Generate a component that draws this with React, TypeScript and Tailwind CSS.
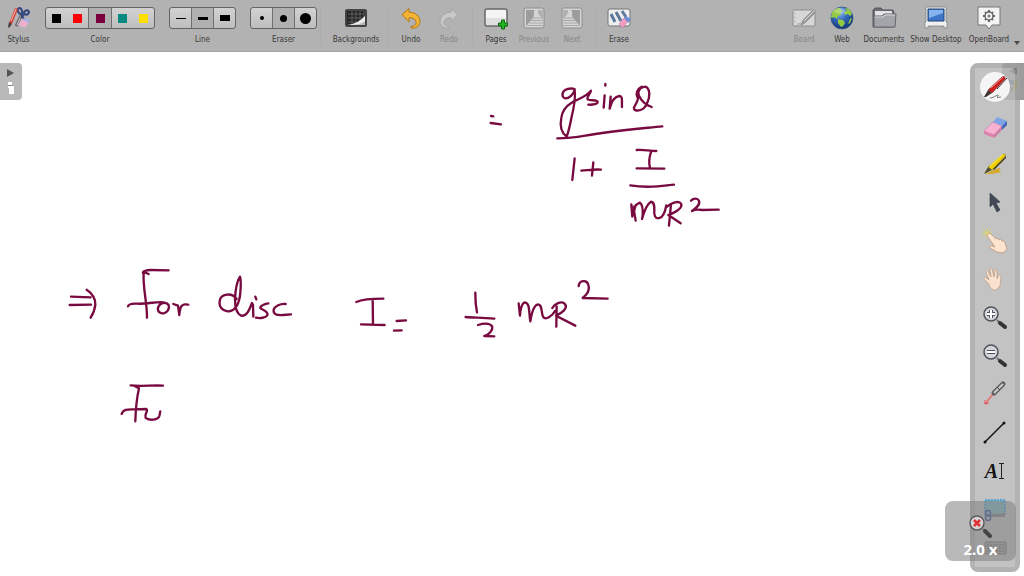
import type { ReactNode } from 'react';

type ToolProps = { label: string; width: string; disabled?: boolean; children: ReactNode };

function Tool({ label, width, disabled, children }: ToolProps) {
  return (
    <button type="button" disabled={disabled} className={`flex shrink-0 flex-col items-center gap-1 ${width}`}>
      <span className={`flex h-6 items-center justify-center ${disabled ? 'opacity-60' : ''}`}>{children}</span>
      <span className={`text-[8px] leading-3 whitespace-nowrap ${disabled ? 'text-[#868686]' : 'text-[#383838]'}`}>{label}</span>
    </button>
  );
}

type Choice = { name: string; mark: string };
type ChoiceGroupProps = { label: string; choices: Choice[]; selected: number; width: string; margin: string };

function ChoiceGroup({ label, choices, selected, width, margin }: ChoiceGroupProps) {
  return (
    <div role="group" aria-label={label} className={`flex shrink-0 flex-col items-center gap-1 ${margin}`}>
      <div className="flex h-6 items-center">
        <div className={`flex h-[22px] overflow-hidden rounded-[3px] border border-[#646464] bg-linear-to-b from-[#d2d2d2] to-[#bebebe] ${width}`}>
          {choices.map((c, i) => (
            <button
              key={c.name}
              type="button"
              aria-label={c.name}
              aria-pressed={i === selected}
              className={`flex min-w-0 flex-1 items-center justify-center ${i === selected ? 'border-x border-[#707070] bg-[#b0b0b0]' : ''}`}
            >
              <span className={`shrink-0 ${c.mark}`} />
            </button>
          ))}
        </div>
      </div>
      <span className="text-[8px] leading-3 text-[#383838]">{label}</span>
    </div>
  );
}

const colors: Choice[] = [
  { name: 'Black', mark: 'size-[9px] bg-black' },
  { name: 'Red', mark: 'size-[9px] bg-[#ff0000]' },
  { name: 'Burgundy', mark: 'size-[9px] bg-[#7b0040]' },
  { name: 'Teal', mark: 'size-[9px] bg-[#078a80]' },
  { name: 'Yellow', mark: 'size-[9px] bg-[#ffdf00]' },
];
const lines: Choice[] = [
  { name: 'Fine line', mark: 'h-[1px] w-[10px] bg-black' },
  { name: 'Medium line', mark: 'h-[3px] w-[10px] bg-black' },
  { name: 'Strong line', mark: 'h-[6px] w-[10px] bg-black' },
];
const erasers: Choice[] = [
  { name: 'Small eraser', mark: 'size-1 rounded-full bg-black' },
  { name: 'Medium eraser', mark: 'size-[7px] rounded-full bg-black' },
  { name: 'Large eraser', mark: 'size-[11px] rounded-full bg-black' },
];

function StylusIcon() {
  return (
    <svg width="24" height="24" viewBox="0 0 24 24" fill="none" aria-hidden="true">
      <path d="m15 8-6 12" stroke="#6d6a70" strokeWidth="3" />
      <path d="m15 8-5 11" stroke="#c9c9cf" />
      <ellipse cx="13" cy="5" rx="2" ry="3" stroke="#33457c" strokeWidth="2" transform="rotate(-20 13 5)" />
      <ellipse cx="19.500" cy="6.500" rx="2.500" ry="2" stroke="#33457c" strokeWidth="2" transform="rotate(-35 19.500 6.500)" />
      <path d="m14 8 3 5M17 8l-3 4" stroke="#33457c" strokeWidth="2" />
      <path d="m2 17 6-15 3 1-6 15z" fill="#d2453c" />
      <path d="M4 15 9 3" stroke="#f4b9b2" />
      <path d="m1 21 1-5 3 2-3 4z" fill="#463c38" />
      <path d="m11 19 4-6 7 3-4 6z" fill="#eab0cd" />
      <path d="m15 13 3-1 5 2-1 3z" fill="#9fb2e6" />
    </svg>
  );
}

function BackgroundsIcon() {
  return (
    <svg width="24" height="20" viewBox="0 0 24 20" fill="none" aria-hidden="true">
      <rect x="2" y="2" width="20" height="16" rx="1" fill="#272727" stroke="#444" strokeWidth="2" />
      <path d="M4 6h16M4 10h16M8 3v13M12 3v13M16 3v13M20 3v8M4 14h8" stroke="#707070" strokeWidth=".7" />
      <path d="M3 17C12 16 17 12 21 8v9z" fill="#efefef" />
      <path d="M5 17c7 0 12-1 16-4v4z" fill="#b9b9b9" />
    </svg>
  );
}

function ArrowIcon({ redo }: { redo?: boolean }) {
  return (
    <svg width="20" height="22" viewBox="0 0 20 22" aria-hidden="true">
      <path
        transform={redo ? 'matrix(-1 0 0 1 20 0)' : undefined}
        d="M1 7.5 8 1.5v3.7c7 0 11 4.5 11 9.3 0 3-2 5.500-5 6.500H10v-1.700c4 0 5.500-2 5-4.500-.5-2.500-3-4-7-4v4z"
        fill={redo ? '#d6d6d6' : '#f5b335'}
        stroke={redo ? '#9a9a9a' : '#b07714'}
      />
    </svg>
  );
}

function PagesIcon() {
  return (
    <svg width="26" height="24" viewBox="0 0 26 24" aria-hidden="true">
      <rect x="2" y="3" width="22" height="17" rx="2" fill="#f4f4f4" stroke="#676767" strokeWidth="1.500" />
      <path d="M3 12h20v7H3z" fill="#dfdfdf" />
      <path d="M18.500 14h3v3h3v3h-3v3h-3v-3h-3v-3h3z" fill="#22b422" stroke="#0c6b10" />
    </svg>
  );
}

function StairsIcon({ flip }: { flip?: boolean }) {
  return (
    <svg width="22" height="24" viewBox="0 0 22 24" aria-hidden="true">
      <rect x="1" y="2" width="20" height="20" rx="2" fill="#ededed" stroke="#777" />
      <g transform={flip ? 'matrix(-1 0 0 1 22 0)' : undefined}>
        <path d="M3 4h9C9 7 13 9 9 13l-6 7z" fill="#8f8f8f" />
        <path d="M15 4h5v9c-2-3-6-4-5-9z" fill="#b1b1b1" />
        <path d="M9 12h11M8 14.500h12M6 17h14M4 19.500h16" stroke="#a2a2a2" />
      </g>
    </svg>
  );
}

function EraseIcon() {
  return (
    <svg width="26" height="24" viewBox="0 0 26 24" aria-hidden="true">
      <rect x="2" y="3" width="22" height="17" rx="2" fill="#eeeeee" stroke="#747474" />
      <path d="m5 8 4 8M10 6l5 9M16 5l4 6" stroke="#5d789d" strokeWidth="3" />
      <path d="m13 18 5-6 4 3-5 7z" fill="#ef9dc0" stroke="#ba6d94" strokeWidth=".5" />
      <path d="m18 12 2-2 5 3-3 4z" fill="#7190d5" />
    </svg>
  );
}

function BoardIcon() {
  return (
    <svg width="24" height="20" viewBox="0 0 24 20" aria-hidden="true">
      <rect x="1" y="2" width="22" height="16" rx="1" fill="#f0f0f0" stroke="#777" />
      <path d="M3 5v1M3 9v1M3 13v1M5 16h6" stroke="#888" />
      <path d="m9 17 2-5L20 3l3 2-10 10z" fill="#8b8b8b" stroke="#555" strokeWidth=".5" />
      <path d="m12 13 9-9" stroke="#eee" />
    </svg>
  );
}

function WebIcon() {
  return (
    <svg width="24" height="24" viewBox="0 0 24 24" aria-hidden="true">
      <defs>
        <radialGradient id="sea" cx=".4" cy=".25" r=".8">
          <stop offset="0" stopColor="#8fb9ef" />
          <stop offset=".45" stopColor="#3269bd" />
          <stop offset="1" stopColor="#12316d" />
        </radialGradient>
      </defs>
      <circle cx="12" cy="12" r="11" fill="url(#sea)" stroke="#31507d" strokeWidth=".7" />
      <path d="M2 7c2-4 5-5 8-5l1 2 2 1-3 2 1 2-3 1-1 3-3-2-2 1-1-1zM15 2c4 0 6 3 7 6l-2 2-2-2-3 1-1-3 3-1zM8 13l5 1 2 3-2 3-2 1-3-4zM20 13l2-1-2 5-2 1z" fill="#95ca42" />
      <ellipse cx="10" cy="5" rx="6" ry="3" fill="#fff" opacity=".25" />
    </svg>
  );
}

function DocumentsIcon() {
  return (
    <svg width="26" height="24" viewBox="0 0 26 24" aria-hidden="true">
      <path d="M2 21V4l2-2h6l2 2h10l1 3v14z" fill="#6b6d72" stroke="#55575b" />
      <path d="M4 5h17v12H4z" fill="#e4e4e4" />
      <path d="M3 21V10h8l2-2h12l-1 13z" fill="#a3a5aa" stroke="#65676b" />
      <path d="M4 11h8l2-2h10" stroke="#d6d6d6" fill="none" />
    </svg>
  );
}

function DesktopIcon() {
  return (
    <svg width="24" height="24" viewBox="0 0 24 24" aria-hidden="true">
      <path d="M2 1h20v15h1v6h-3v-2H4v2H1v-6h1z" fill="#f0f0f0" stroke="#777" strokeWidth=".7" />
      <path d="M4 3h16v12H4z" fill="#3e77c9" stroke="#244574" />
      <path d="M5 4h14v3L5 12z" fill="#86b4ef" />
    </svg>
  );
}

function OpenBoardIcon() {
  return (
    <svg width="26" height="24" viewBox="0 0 26 24" aria-hidden="true">
      <path d="M2 1h22v18h-8l-3 4-3-4H2z" fill="#f3f3f3" stroke="#777" />
      <circle cx="13" cy="10" r="4" fill="none" stroke="#666" strokeWidth="1.500" />
      <path d="M13 4v2M13 14v2M7 10h2M17 10h2M9 6l1 1M16 13l1 1M17 6l-1 1M9 14l1-1" stroke="#666" strokeWidth="2" />
      <circle cx="13" cy="10" r="1.500" fill="#777" />
    </svg>
  );
}

const Art = ({ children }: { children: ReactNode }) => (
  <svg width="30" height="30" viewBox="0 0 30 30" fill="none" aria-hidden="true">{children}</svg>
);

const Hand = () => (
  <path d="M9 20 4 15c-1-1 1-3 2-1l3 2-3-8c-.5-2 1.500-2 2-1l3 6-1-8c0-2 2-2 2 0l2 8 1-7c.5-1 2-1 2 1v8l2-4c1-1 2-.5 2 1l-1 10-4 4c-4 0-6-2-7-6z" fill="#fbe2ce" stroke="#b99884" strokeWidth=".7" />
);

function Lens({ sign }: { sign: string }) {
  return (
    <>
      <path d="m17 17 3 3" stroke="#777" strokeWidth="2" />
      <path d="m20 20 5 4" stroke="#333" strokeWidth="4" strokeLinecap="round" />
      <circle cx="11" cy="11" r="7" fill="#d2d6da" stroke="#50535c" strokeWidth="1.500" />
      <path d={sign} stroke="#4c5261" strokeWidth="4" />
      <path d={sign} stroke="#fff" strokeWidth="2" />
    </>
  );
}

const palette: { name: string; art: ReactNode }[] = [
  {
    name: 'Pen',
    art: (
      <>
        <circle cx="15" cy="15" r="15" fill="#f5f5f5" />
        <path d="m8 18 14-13c2-1 4 0 3 2L12 21z" fill="#cf2020" stroke="#6b2524" strokeWidth=".6" />
        <path d="m11 16 12-11" stroke="#ff958e" />
        <path d="m4 25 4-7 4 3-6 4z" fill="#44342f" />
        <path d="m17 17 10-11" stroke="#493936" />
        <path d="M10 26c4 0 9-5 8-2-2 3 1 1 3 1" stroke="#555" strokeWidth=".8" />
      </>
    ),
  },
  {
    name: 'Eraser',
    art: (
      <>
        <path d="m4 20 9-9 9 4-8 9z" fill="#f8b1d0" stroke="#c7799f" strokeWidth=".6" />
        <path d="m4 20 10 4v3L4 23z" fill="#dc83ae" />
        <path d="m13 11 4-5 10 4-5 5z" fill="#7fa4e5" />
        <path d="m22 15 5-5v4l-5 5z" fill="#3e63bb" />
        <path d="m14 24 8-9v4l-8 8z" fill="#cc7ba4" />
      </>
    ),
  },
  {
    name: 'Highlighter',
    art: (
      <>
        <path d="m5 25 14-6c2 0 2 1 0 2l2 2-9 2z" fill="#d5aa29" />
        <path d="m8 18 15-13 3 1-14 15z" fill="#f1d000" stroke="#9a8613" strokeWidth=".6" />
        <path d="m10 17 13-12" stroke="#fff36c" />
        <path d="m13 20 13-13v2L14 21z" fill="#423b12" />
        <path d="m4 25 4-7 4 3z" fill="#56502f" />
      </>
    ),
  },
  { name: 'Select', art: <path d="m10 6 10 9-4 1 4 7-3 2-4-8-3 3z" fill="#424858" stroke="#303540" strokeWidth=".6" /> },
  {
    name: 'Interact',
    art: (
      <>
        <path d="M7 2v10M2 7h10M3 3l8 8M11 3l-8 8" stroke="#ddd46c" />
        <path d="M8 8c1-1 2-1 3 0l5 5c1-1 2-1 3 1 1-1 3-1 3 1 2 0 3 1 3 2l2 6-4 4-6-1-7-4c-1-2 0-3 2-2l3 1-7-10c-1-1-1-2 0-3z" fill="#fde4cf" stroke="#b78e77" strokeWidth=".7" />
      </>
    ),
  },
  { name: 'Scroll page', art: <Hand /> },
  { name: 'Zoom in', art: <Lens sign="M7 11h8M11 7v8" /> },
  { name: 'Zoom out', art: <Lens sign="M7 11h8" /> },
  {
    name: 'Laser pointer',
    art: (
      <>
        <path d="m5 25 8-10" stroke="#e77878" strokeWidth="2" />
        <path d="m5 21 0 4 4-1" stroke="#e04f56" />
        <path d="m14 14 9-9" stroke="#5d5d5d" strokeWidth="5" strokeLinecap="round" />
        <path d="m14 14 9-9" stroke="#cecece" strokeWidth="2" />
        <path d="m17 8 3 3" stroke="#444" />
      </>
    ),
  },
  {
    name: 'Line',
    art: (
      <>
        <path d="M5 24 24 5" stroke="#111" strokeWidth="1.500" />
        <circle cx="5" cy="24" r="1.500" fill="#111" />
        <circle cx="24" cy="5" r="1.500" fill="#111" />
      </>
    ),
  },
  { name: 'Text', art: null },
  {
    name: 'Capture',
    art: (
      <>
        <rect x="5" y="6" width="20" height="16" fill="#83b9c2" stroke="#4199d8" strokeWidth="1.500" strokeDasharray="2 1" />
        <path d="m11 20 14 2M11 22l14-2" stroke="#868b91" strokeWidth="2" />
        <circle cx="8" cy="19" r="2.500" stroke="#48589c" strokeWidth="1.500" />
        <circle cx="8" cy="24" r="2.500" stroke="#48589c" strokeWidth="1.500" />
      </>
    ),
  },
  {
    name: 'Virtual keyboard',
    art: (
      <>
        <rect x="5" y="9" width="21" height="12" rx="1" fill="#aaa" stroke="#777" />
        <path d="M7 12h17M7 15h17M7 18h17" stroke="#666" strokeDasharray="2 1" />
      </>
    ),
  },
];

/* Pen strokes on the board, grouped by the area in which they were written. */
const ink: { place: string; strokes: string[] }[] = [
  {
    place: 'translate(470 70) scale(.3333)',
    strokes: [
      'M63 138l7 1M62 159l31 4',
      'M314 57c-14-4-29 1-34 8-5 9-2 19 5 20 13 1 25-13 29-25 3 25-3 56-9 80-4 21-9 44-15 60-17-13-20-37-16-57 3-20 16-36 31-45 17-11 42-15 58-36-3 12-14 18-10 26 7 5 30 0 30 8 0 6-14 9-28 8',
      'M406 42v5M404 76l-3 37',
      'M422 80l-3 36c5-20 13-36 29-38 11 0 7 14 8 33',
      'M516 50c-16 8-19 21-13 32 4 9-7 20-11 31-2 11 17 11 28 3 10-8 18-29 18-45-1-16-8-23-17-20-14 4-19 14-14 26 8 18 19 27 38 34',
      'M262 205c24 0 55-3 84-8 77-14 153-20 231-28',
      'M314 265l-7 65M334 302c19-1 40-5 59-3M370 277l-4 40',
      'M500 240c17-2 34 2 59 3M544 244c-6 15-8 33-4 50M500 295l83 1',
      'M481 346c30 5 59 5 82 3l49-5',
      'M484 403l3 37 10-34 12-8c10 5 10 24 9 40l-2 9c7-25 18-47 27-52 14 3 9 23 10 36 2 12 7 15 16 13 10-3 17-21 20-38',
      'M490 410l7 42M603 403l-6 64M590 411c15-13 37-21 44-9 3 13-18 25-39 33l37 25',
      'M663 392c7-8 20-8 24 0 5 13-10 23-21 31 9-5 20-5 32-3l48-1',
    ],
  },
  {
    place: 'translate(50 255) scale(.3333)',
    strokes: [
      'M63 125l59 2M59 150l64-1M110 104c17 11 28 29 26 45-2 18-6 27-14 39',
      'M286 53l10 4M281 57c-3 40 11 89 10 131M279 54c-1-7 12-8 24-9l53 1',
      'M234 154c3-9 14-9 27-8 34 2 67-9 83-3-18 2-24 17-18 27 12 12 30 1 31-14 0-10-9-13-17-12',
      'M370 147l14 5 4 28c2-25 8-33 18-32l9 1',
      'M560 132c-14-20-45-16-50 2-5 20 5 32 23 35 24 1 36-26 38-56 2-22 3-37-1-48-10 15-14 45-15 68 0 25 5 43 18 49 17 3 25-17 33-38M616 125l3 8M609 148l1 37',
      'M655 145c-9 1-25 8-24 14 6 7 26 10 21 22-5 7-21 10-34 7',
      'M707 147c-14-3-34 8-36 17-2 18 16 17 29 16l23-2',
      'M242 391c31 4 64-1 97 1M252 392l15 8c-7 31-10 64-11 99M215 477c5-16 21-14 37-14l37-1c8 6-7 13-2 27 10 9 38 6 41-6l3-14',
    ],
  },
  {
    place: 'translate(340 270) scale(.3333)',
    strokes: [
      'M49 96c20-9 50-10 81-10M98 88l1 75M63 163l71 2M170 153l28-2M162 182l23-1',
      'M406 68l1 31 4 28M377 141c25 2 48 2 86 5M414 165c20-6 36-6 43 5 2 12-12 25-24 28l30 1',
      'M536 100l4 37c1-20 5-35 14-40 17 2 12 30 17 57 4-26 11-49 23-51 13 0 9 22 15 37 7 13 28-2 36-17M650 109l-1 61M637 114c7-14 27-21 36-14 15 15-11 31-25 37l58 30',
      'M716 48c2-18 25-19 29-4 6 17-5 31-17 40l75 2',
    ],
  },
];

function Ink() {
  return (
    <svg width="1024" height="524" viewBox="0 52 1024 524" role="img" aria-label="Handwritten notes" className="absolute top-0 left-0">
      {ink.map((area) => (
        <g key={area.place} transform={area.place} fill="none" stroke="#780a40" strokeWidth="7" strokeLinecap="round" strokeLinejoin="round">
          {area.strokes.map((d) => (
            <path key={d} d={d} />
          ))}
        </g>
      ))}
    </svg>
  );
}

export default function App() {
  return (
    <div className="flex min-h-screen flex-col bg-white font-['DejaVu_Sans_Condensed','DejaVu_Sans',sans-serif]">
      <header className="flex h-[52px] shrink-0 items-start justify-between border-b border-[#a6a6a6] bg-[#b2b2b2] pt-1.5">
        <div className="flex">
          <Tool label="Stylus" width="w-[37px]"><StylusIcon /></Tool>
          <ChoiceGroup label="Color" choices={colors} selected={2} width="w-[110px]" margin="ml-2" />
          <ChoiceGroup label="Line" choices={lines} selected={1} width="w-[67px]" margin="ml-3.5" />
          <ChoiceGroup label="Eraser" choices={erasers} selected={1} width="w-[67px]" margin="ml-3.5" />
          <span className="mx-[3px] w-px bg-[#adadad]" />
          <Tool label="Backgrounds" width="w-16"><BackgroundsIcon /></Tool>
          <span className="mr-[3px] w-px bg-[#adadad]" />
          <Tool label="Undo" width="w-[38px]"><ArrowIcon /></Tool>
          <Tool label="Redo" width="w-[38px]" disabled><ArrowIcon redo /></Tool>
          <span className="mx-1 w-px bg-[#adadad]" />
          <Tool label="Pages" width="w-[38px]"><PagesIcon /></Tool>
          <Tool label="Previous" width="w-[38px]" disabled><StairsIcon /></Tool>
          <Tool label="Next" width="w-[38px]" disabled><StairsIcon flip /></Tool>
          <span className="mx-1 w-px bg-[#adadad]" />
          <Tool label="Erase" width="w-[38px]"><EraseIcon /></Tool>
        </div>
        <div className="flex pr-[3px]">
          <Tool label="Board" width="w-[38px]" disabled><BoardIcon /></Tool>
          <Tool label="Web" width="w-[38px]"><WebIcon /></Tool>
          <Tool label="Documents" width="w-[46px]"><DocumentsIcon /></Tool>
          <Tool label="Show Desktop" width="w-[58px]"><DesktopIcon /></Tool>
          <Tool label="OpenBoard" width="w-12"><OpenBoardIcon /></Tool>
          <svg width="8" height="5" viewBox="0 0 8 5" className="self-end" aria-hidden="true">
            <path d="M1 0h6L4 4z" fill="#4a4a4a" />
          </svg>
        </div>
      </header>

      <main className="relative flex flex-1 items-stretch justify-between">
        <Ink />

        <button type="button" aria-label="Show pages" className="relative mt-[11px] flex h-[37px] w-[22px] items-center justify-center self-start rounded-r bg-[#b9b9b9]">
          <svg width="12" height="28" viewBox="0 0 12 28" aria-hidden="true">
            <path d="m2 1 7 4-7 4z" fill="#555" />
            <path d="M3 14h4v3H3zM3 18h6v2H3zM4 20h5v6H4z" fill="#fff" />
            <path d="M3 17.500h5" stroke="#888" />
          </svg>
        </button>

        <button type="button" aria-label="Show library" className="absolute top-[11px] right-0 flex h-[37px] w-[22px] justify-center rounded-l bg-[#9c9c9c]">
          <svg width="18" height="30" viewBox="0 0 18 30" aria-hidden="true">
            <path d="m13 4-8 4 8 4z" fill="#111" />
            <path d="M5 17h5v5H5z" fill="#173f77" />
            <path d="M10 18h3v9h-3z" fill="#b09000" />
            <path d="M5 24h4v4H5z" fill="#206a20" />
          </svg>
        </button>

        <nav aria-label="Drawing tools" className="relative mt-[11px] mr-1 mb-1 flex w-[50px] flex-col rounded-lg border-[5px] border-[#a0a0a0]/80 bg-[#b8b8b8]/85 bg-clip-padding">
          {palette.map((tool) => (
            <button key={tool.name} type="button" aria-label={tool.name} className="flex flex-1 items-center justify-center">
              {tool.art ? (
                <Art>{tool.art}</Art>
              ) : (
                <span className="flex items-center font-['Liberation_Serif',serif] text-xl leading-6 text-[#161616]">
                  <b className="italic">A</b>
                  <svg width="7" height="18" viewBox="0 0 7 18" fill="none" aria-hidden="true">
                    <path d="M1 1.500h5M1 16.500h5M3.500 1v15" stroke="#222" />
                  </svg>
                </span>
              )}
            </button>
          ))}
        </nav>

        <div className="absolute right-2 bottom-[15px] flex h-[60px] w-[71px] flex-col items-center justify-end rounded-lg bg-[#808080]/55 pb-1">
          <svg width="30" height="30" viewBox="0 0 30 30" fill="none" aria-hidden="true">
            <path d="m17 18 2 2" stroke="#777" strokeWidth="2" />
            <path d="m19 20 5 5" stroke="#444" strokeWidth="4" strokeLinecap="round" />
            <circle cx="11" cy="12" r="7" fill="#d5d5d5" stroke="#5c5c5c" strokeWidth="1.500" />
            <path d="m8 9 6 6M14 9l-6 6" stroke="#e33232" strokeWidth="2.500" />
          </svg>
          <output className="font-['Noto_Sans',sans-serif] text-[15px] leading-4 font-bold text-white">2.0 x</output>
        </div>
      </main>
    </div>
  );
}
